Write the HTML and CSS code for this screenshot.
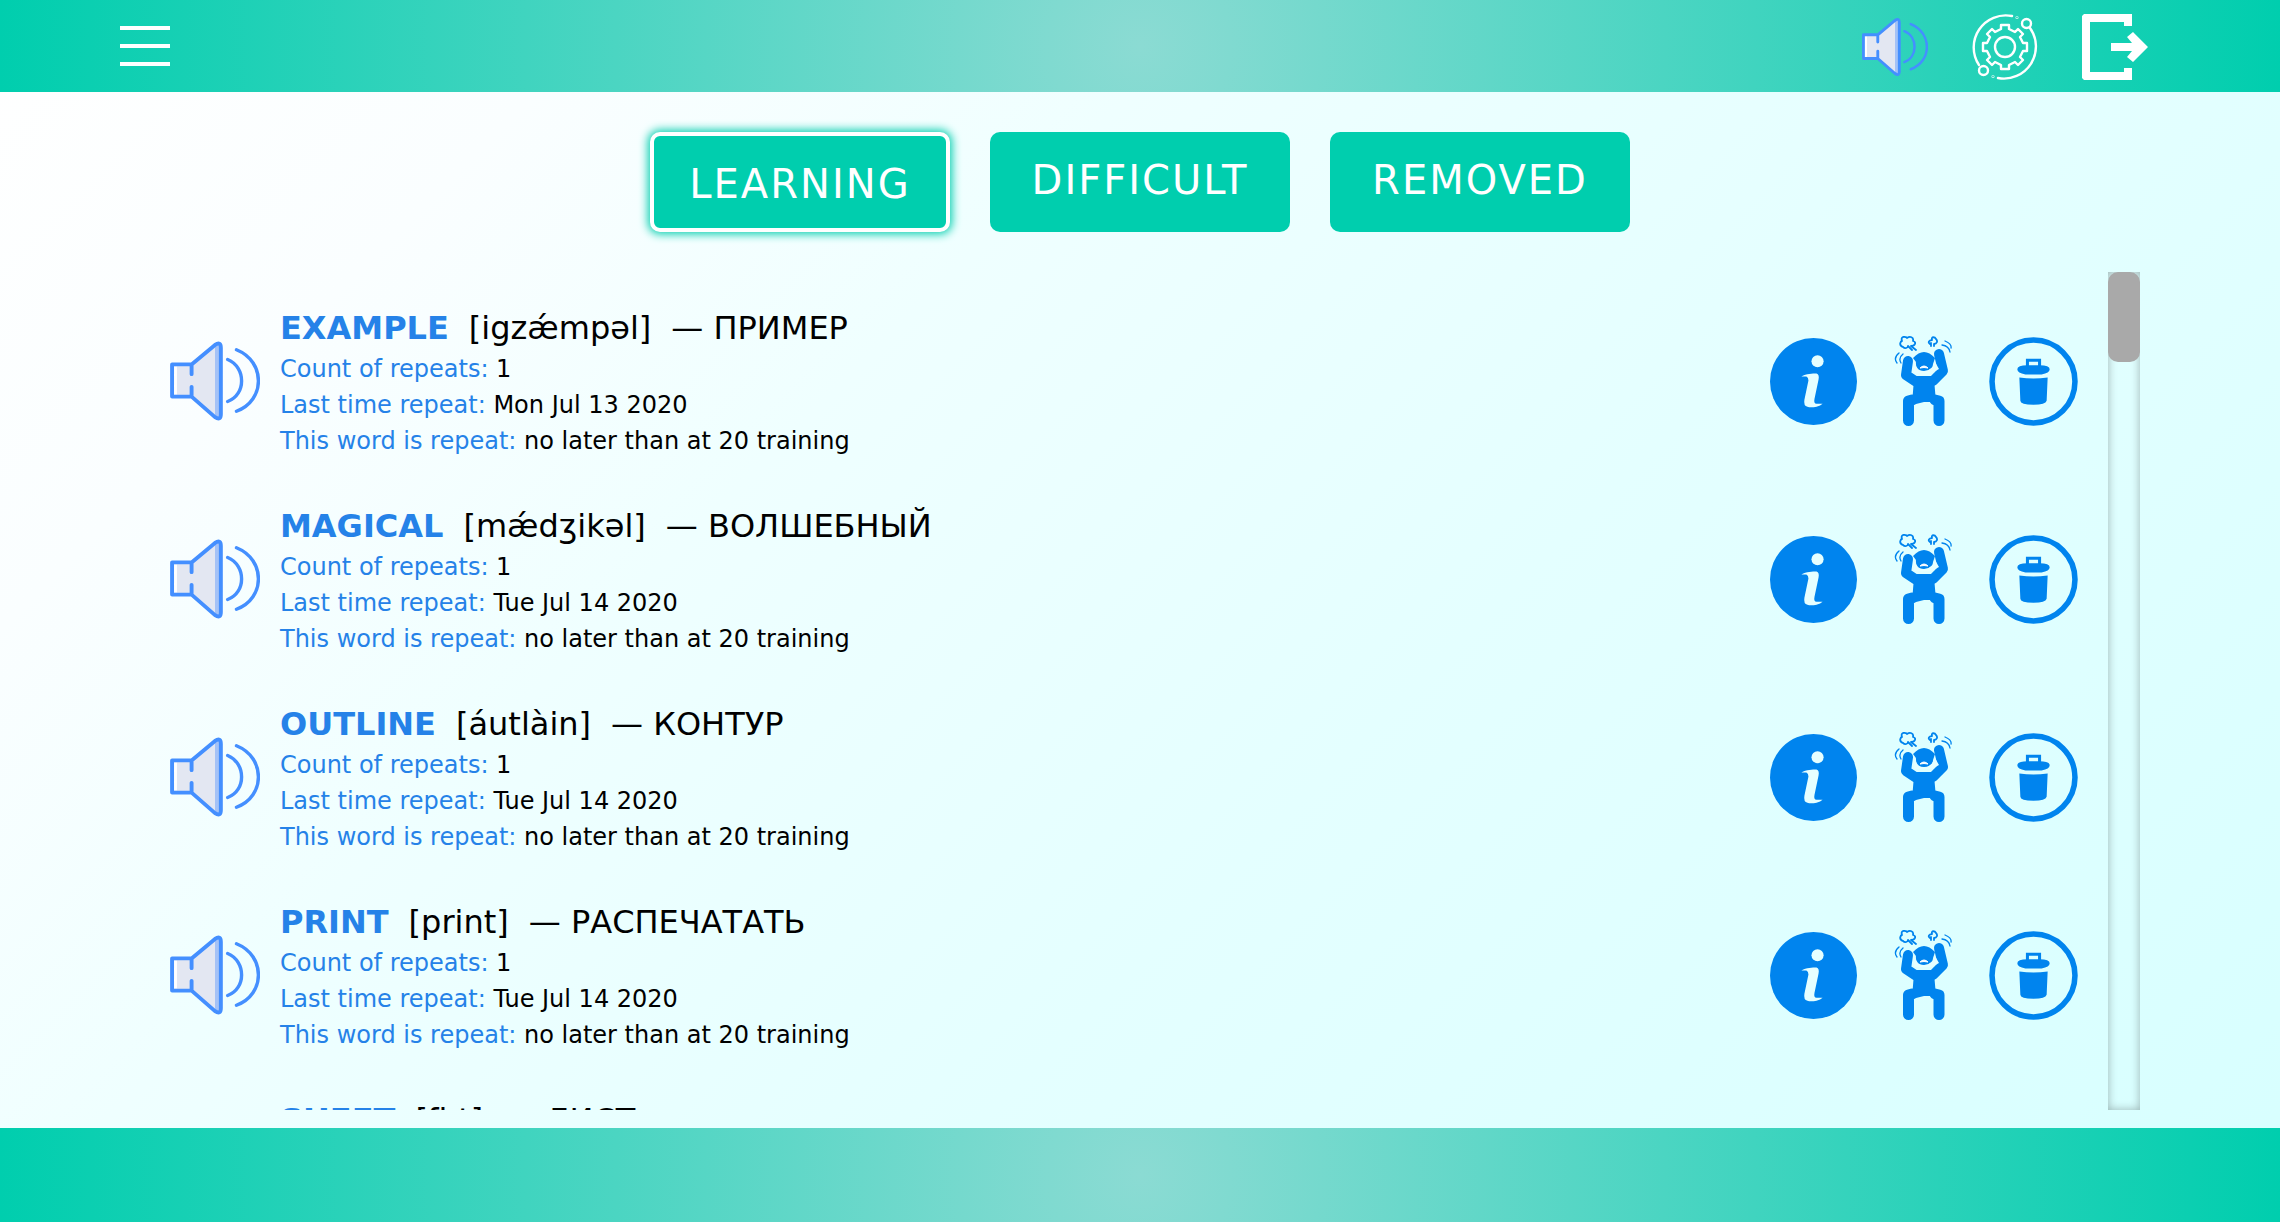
FILE: index.html
```html
<!DOCTYPE html>
<html lang="en">
<head>
<meta charset="utf-8">
<title>Vocabulary</title>
<link rel="stylesheet" href="styles.css">
</head>
<body>
<svg class="sprite" aria-hidden="true">
  <symbol id="speaker" viewBox="0 0 92 82">
    <path d="M2 24H22L48 3Q52 1 52 5V77Q52 81 48 79L22 57H2Z" fill="#e3e7f2"/>
    <path d="M3 26H7V55H3Z" fill="#fff"/>
    <path d="M46 5L52 3V79L46 77Z" fill="#a4c2f7"/>
    <path d="M22 34V24H2V57H22V47M22 24L46 4Q52 0 52 7V75Q52 82 46 78L22 57" fill="none" stroke="#448fff" stroke-width="4" stroke-linecap="round" stroke-linejoin="round"/>
    <path d="M59 19C78 27 78 55 59 62M68 9C98 21 98 61 68 72" fill="none" stroke="#448fff" stroke-width="3.500" stroke-linecap="round"/>
  </symbol>
  <symbol id="info" viewBox="0 0 86 86">
    <circle cx="43" cy="43" r="43" fill="#0084ee"/>
    <circle cx="47" cy="23" r="6" fill="#e6ffff"/>
    <path d="M31 38C36 35 42 35 46 35Q49 36 48 41L44 60Q43 65 46 65L52 65Q50 67 46 68Q40 69 37 68Q33 67 34 61L38 42Q38 39 36 38Z" fill="#e6ffff"/>
  </symbol>
  <symbol id="difficult" viewBox="0 0 58 90">
    <g fill="none" stroke="#0084ee" stroke-linecap="round" stroke-linejoin="round">
      <path d="M14 25L12 39L21 45H39L49 35L45 18" stroke-width="10"/>
      <path d="M14.500 84.500V65L18 64M41 64L45 65V84.500" stroke-width="11"/>
      <path d="M9 11C4 9 7 5 8 5C6 -1 13 1 13 2C16 0 20 1 19 5C23 6 21 10 17 10L22 14M9 11C11 13 14 12 14 10L18 14M36 8C33 6 36 4 38 4C37 0 41 1 42 3C44 5 43 8 40 8M37 7V10M40 8V10" stroke-width="1.800"/>
      <path d="M5 17Q-1 22 3 27M9 18Q4 22 7 27M48 9Q55 10 56 16M51 5Q58 8 57 12" stroke-width="1.300"/>
    </g>
    <path d="M20 43H40L42 66H36L30 66L22 68H18Z" fill="#0084ee"/>
    <path d="M19 22Q30 10 41 22L39 28Q39 34 30 34Q22 34 22 26Z" fill="#0084ee"/>
    <path d="M19 25Q21 34 30 35Q39 34 41 26L45 33L37 37H20Z" fill="#e6ffff"/>
    <path d="M22 24Q21 35 30 35Q39 35 39 24Z" fill="#0084ee"/>
    <path d="M26 32Q30 28 34 32Q30 31 26 32Z" fill="#fff" stroke="#fff"/>
  </symbol>
  <symbol id="trash" viewBox="0 0 88 88">
    <circle cx="44" cy="44" r="41" fill="none" stroke="#0084ee" stroke-width="5.500"/>
    <path d="M38 30V23H50V30" fill="none" stroke="#0084ee" stroke-width="3"/>
    <path d="M28 32Q28 28 38 28H50Q60 28 60 32Q60 36 52 37H36Q28 36 28 32ZM30 40Q44 42 58 40L57 63Q56 67 44 67Q31 67 31 63Z" fill="#0084ee"/>
  </symbol>
</svg>

<header class="bar header">
  <button class="burger" aria-label="Menu"><span></span><span></span><span></span></button>
  <div class="tools">
    <button class="icon-button" aria-label="Sound"><svg class="tool-icon" aria-hidden="true"><use href="#speaker"/></svg></button>
    <button class="icon-button" aria-label="Settings">
      <svg class="tool-icon" viewBox="0 0 66 66" fill="none" stroke="#fff" stroke-width="2.400" stroke-linecap="round" stroke-linejoin="round" aria-hidden="true">
        <path d="M40 2A32 32 0 0 0 7 51M58 14A32 32 0 0 1 26 64"/>
        <circle cx="54.500" cy="9.500" r="4.500"/><circle cx="11.500" cy="56.500" r="4.500"/>
        <circle cx="33" cy="33" r="10"/>
        <circle cx="45" cy="3.500" r=".3"/><circle cx="21" cy="62.500" r=".3"/>
        <path d="M29 11H37V15L43 18L46 15L51 20L48 23L51 29H55V37H51L48 43L51 46L46 51L43 48L37 51V55H29V51L23 48L20 51L15 46L18 43L15 37H11V29H15L18 23L15 20L20 15L23 18L29 15Z"/>
      </svg>
    </button>
    <button class="icon-button" aria-label="Log out">
      <svg class="tool-icon" viewBox="0 0 66 66" fill="#fff" aria-hidden="true">
        <path d="M2 0H50V12H42V8H8V58H42V54H50V66H2L0 64V2ZM29 29H50L45 23L51 18L66 33L51 48L45 43L50 37H29Z"/>
      </svg>
    </button>
  </div>
</header>

<main class="main">
  <nav class="tabs">
    <button class="tab tab-active">LEARNING</button>
    <button class="tab">DIFFICULT</button>
    <button class="tab">REMOVED</button>
  </nav>

  <div class="dictionary">
    <ul class="words">
      <li class="word">
        <button class="icon-button" aria-label="Listen"><svg class="listen" aria-hidden="true"><use href="#speaker"/></svg></button>
        <div class="details">
          <h2 class="title"><b class="term">EXAMPLE</b><span>[igzǽmpəl]</span><span>— ПРИМЕР</span></h2>
          <p class="fact"><span class="label">Count of repeats:</span> 1</p>
          <p class="fact"><span class="label">Last time repeat:</span> Mon Jul 13 2020</p>
          <p class="fact"><span class="label">This word is repeat:</span> no later than at 20 training</p>
        </div>
        <div class="actions">
          <button class="icon-button" aria-label="Information"><svg class="info" aria-hidden="true"><use href="#info"/></svg></button>
          <button class="icon-button" aria-label="Difficult"><svg class="difficult" aria-hidden="true"><use href="#difficult"/></svg></button>
          <button class="icon-button" aria-label="Remove"><svg class="trash" aria-hidden="true"><use href="#trash"/></svg></button>
        </div>
      </li>
      <li class="word">
        <button class="icon-button" aria-label="Listen"><svg class="listen" aria-hidden="true"><use href="#speaker"/></svg></button>
        <div class="details">
          <h2 class="title"><b class="term">MAGICAL</b><span>[mǽdʒikəl]</span><span>— ВОЛШЕБНЫЙ</span></h2>
          <p class="fact"><span class="label">Count of repeats:</span> 1</p>
          <p class="fact"><span class="label">Last time repeat:</span> Tue Jul 14 2020</p>
          <p class="fact"><span class="label">This word is repeat:</span> no later than at 20 training</p>
        </div>
        <div class="actions">
          <button class="icon-button" aria-label="Information"><svg class="info" aria-hidden="true"><use href="#info"/></svg></button>
          <button class="icon-button" aria-label="Difficult"><svg class="difficult" aria-hidden="true"><use href="#difficult"/></svg></button>
          <button class="icon-button" aria-label="Remove"><svg class="trash" aria-hidden="true"><use href="#trash"/></svg></button>
        </div>
      </li>
      <li class="word">
        <button class="icon-button" aria-label="Listen"><svg class="listen" aria-hidden="true"><use href="#speaker"/></svg></button>
        <div class="details">
          <h2 class="title"><b class="term">OUTLINE</b><span>[áutlàin]</span><span>— КОНТУР</span></h2>
          <p class="fact"><span class="label">Count of repeats:</span> 1</p>
          <p class="fact"><span class="label">Last time repeat:</span> Tue Jul 14 2020</p>
          <p class="fact"><span class="label">This word is repeat:</span> no later than at 20 training</p>
        </div>
        <div class="actions">
          <button class="icon-button" aria-label="Information"><svg class="info" aria-hidden="true"><use href="#info"/></svg></button>
          <button class="icon-button" aria-label="Difficult"><svg class="difficult" aria-hidden="true"><use href="#difficult"/></svg></button>
          <button class="icon-button" aria-label="Remove"><svg class="trash" aria-hidden="true"><use href="#trash"/></svg></button>
        </div>
      </li>
      <li class="word">
        <button class="icon-button" aria-label="Listen"><svg class="listen" aria-hidden="true"><use href="#speaker"/></svg></button>
        <div class="details">
          <h2 class="title"><b class="term">PRINT</b><span>[print]</span><span>— РАСПЕЧАТАТЬ</span></h2>
          <p class="fact"><span class="label">Count of repeats:</span> 1</p>
          <p class="fact"><span class="label">Last time repeat:</span> Tue Jul 14 2020</p>
          <p class="fact"><span class="label">This word is repeat:</span> no later than at 20 training</p>
        </div>
        <div class="actions">
          <button class="icon-button" aria-label="Information"><svg class="info" aria-hidden="true"><use href="#info"/></svg></button>
          <button class="icon-button" aria-label="Difficult"><svg class="difficult" aria-hidden="true"><use href="#difficult"/></svg></button>
          <button class="icon-button" aria-label="Remove"><svg class="trash" aria-hidden="true"><use href="#trash"/></svg></button>
        </div>
      </li>
      <li class="word">
        <div class="details details-indent">
          <h2 class="title"><b class="term">SHEET</b><span>[ʃi:t]</span><span>— ЛИСТ</span></h2>
        </div>
      </li>
    </ul>
    <div class="track"><div class="thumb"></div></div>
  </div>
</main>

<footer class="bar footer"></footer>
</body>
</html>
```

FILE: styles.css
```css
* {
  box-sizing: border-box;
}

body {
  display: flex;
  flex-direction: column;
  height: 100vh;
  margin: 0;
  overflow: hidden;
  font-family: "DejaVu Sans", Verdana, sans-serif;
  color: #000;
  background: linear-gradient(135deg, #fff 0%, #fafeff 18%, #efffff 35%, #e4ffff 60%, #d7ffff 100%);
}

button {
  margin: 0;
  padding: 0;
  border: 0;
  background: none;
  font: inherit;
  cursor: pointer;
}

svg {
  display: block;
}

.sprite {
  position: absolute;
  width: 0;
  height: 0;
}

.bar {
  flex: none;
  background: radial-gradient(circle, #8bdbd3 0%, #00ceae 100%);
}

.header {
  display: flex;
  align-items: center;
  justify-content: space-between;
  height: 92px;
  padding: 0 132px 0 120px;
}

.footer {
  height: 94px;
}

.burger {
  display: flex;
  flex-direction: column;
  gap: 14px;
  width: 50px;
}

.burger span {
  height: 4px;
  background: #fff;
}

.tools {
  display: flex;
  gap: 44px;
  padding-top: 2px;
}

.tool-icon {
  width: 66px;
  height: 66px;
}

.main {
  display: flex;
  flex: 1;
  flex-direction: column;
  gap: 40px;
  min-height: 0;
  padding: 40px 140px 18px;
}

.tabs {
  display: flex;
  flex: none;
  justify-content: center;
  gap: 40px;
}

.tab {
  display: flex;
  justify-content: center;
  align-items: flex-start;
  width: 300px;
  height: 100px;
  padding-top: 25px;
  border-radius: 10px;
  color: #fff;
  font-size: 40px;
  line-height: 46px;
  letter-spacing: 2px;
  background: #00ceae;
}

.tab-active {
  border: 4px solid #fff;
  box-shadow: 0 0 10px 2px #00ceae;
}

.dictionary {
  display: flex;
  flex: 1;
  min-height: 0;
}

.words {
  flex: 1;
  margin: 0;
  padding: 11px 0 0;
  overflow: hidden;
  list-style: none;
}

.word {
  display: flex;
  align-items: center;
  gap: 20px;
  padding: 20px 30px 22px;
}

.listen {
  width: 90px;
  height: 80px;
}

.details {
  flex: 1;
  padding-top: 2px;
}

.details-indent {
  padding-left: 110px;
}

.title {
  display: flex;
  gap: 20px;
  margin: 0;
  font-size: 32px;
  font-weight: 400;
  line-height: 46px;
}

.term,
.label {
  color: #2582e8;
}

.fact {
  margin: 0;
  font-size: 24px;
  line-height: 36px;
}

.actions {
  display: flex;
  align-items: center;
  gap: 37px;
}

.info {
  width: 87px;
  height: 87px;
}

.difficult {
  width: 58px;
  height: 90px;
}

.trash {
  width: 89px;
  height: 89px;
}

.track {
  width: 32px;
  box-shadow: inset 0 0 10px rgba(0, 0, 0, 0.3);
}

.thumb {
  height: 90px;
  border-radius: 10px;
  background: #a9a9a9;
}
```
